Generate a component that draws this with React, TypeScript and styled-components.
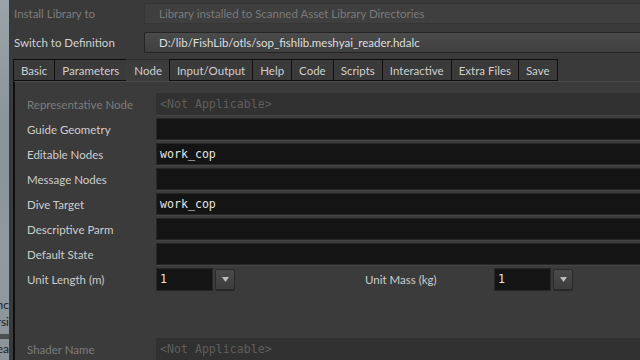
import React from 'react';
import styled, { createGlobalStyle } from 'styled-components';

const GlobalStyle = createGlobalStyle`
  html, body {
    margin: 0;
    padding: 0;
    background-color: #3a3a3a;
  }

  body {
    font-family: Lato, 'Noto Sans', sans-serif;
    font-size: 11.5px;
  }
`;

const Page = styled.div`
  width: 640px;
  height: 360px;
  display: flex;
  overflow: hidden;
`;

const SideStrip = styled.div`
  width: 9px;
  flex-shrink: 0;
  background-color: #8e989d;
  background-image: linear-gradient(
    180deg,
    #9aa3a7 0%,
    #87929a 40%,
    #909a9f 70%,
    #8a949a 100%
  );
  display: flex;
  flex-direction: column;
  justify-content: flex-end;
  align-items: flex-end;
  padding-bottom: 3px;
  overflow: hidden;
  color: #1e1e1e;
  font-size: 12px;
`;

const StripWord = styled.div`
  white-space: nowrap;
  line-height: 17px;
`;

const StripBar = styled.div`
  width: 100%;
  height: 5px;
  margin: 4px 0px 1px 0px;
  background-color: #4a4f52;
`;

const Panel = styled.div`
  flex: 1;
  min-width: 0;
  background-color: #3a3a3a;
  padding: 3px 0px 0px 4px;
  display: flex;
  flex-direction: column;
`;

const TopRow = styled.div`
  height: 21px;
  display: flex;
  align-items: center;
  margin-bottom: 8px;
`;

const TopLabel = styled.div<{ $dim?: boolean }>`
  width: 130px;
  flex-shrink: 0;
  padding-left: 1px;
  color: ${(p) => (p.$dim ? '#7c7c7c' : '#d2d2d2')};
`;

const TopField = styled.div<{ $button?: boolean }>`
  flex: 1;
  height: 100%;
  box-sizing: border-box;
  padding-left: 14px;
  display: flex;
  align-items: center;
  white-space: nowrap;
  overflow: hidden;
  border: 1px solid ${(p) => (p.$button ? '#252525' : '#363636')};
  border-right: none;
  border-radius: 2px 0px 0px 2px;
  background: ${(p) =>
    p.$button ? 'linear-gradient(180deg, #4b4b4b, #3f3f3f)' : '#3f3f3f'};
  color: ${(p) => (p.$button ? '#dedede' : '#7a7a7a')};
`;

const TabBar = styled.div`
  display: flex;
  height: 22px;
  margin-top: -2px;
`;

const Tab = styled.div<{ $active?: boolean }>`
  box-sizing: border-box;
  height: 22px;
  padding: 0px 7px;
  display: flex;
  align-items: center;
  color: #cfcfcf;
  background-color: ${(p) => (p.$active ? '#3c3c3c' : '#3a3a3a')};
  border: 1px solid ${(p) => (p.$active ? '#3c3c3c' : '#0e0e0e')};
  border-top-color: ${(p) => (p.$active ? '#2e2e2e' : '#0e0e0e')};
  border-bottom: ${(p) => (p.$active ? 'none' : '1px solid #0e0e0e')};
  margin-left: -1px;

  &:first-child {
    margin-left: 0px;
  }
`;

const TabPane = styled.div`
  flex: 1;
  border-left: 2px solid #0e0e0e;
  border-top: 1px solid #4a4a4a;
  background-color: #3b3b3b;
  padding: 11px 0px 0px 12px;
  display: flex;
  flex-direction: column;
  gap: 3px;
`;

const Row = styled.div<{ $spaced?: boolean }>`
  height: 22px;
  display: flex;
  align-items: center;
  margin-top: ${(p) => (p.$spaced ? '45px' : '0px')};
`;

const Label = styled.div<{ $dim?: boolean }>`
  width: 129px;
  flex-shrink: 0;
  color: ${(p) => (p.$dim ? '#7c7c7c' : '#cdcdcd')};
  white-space: nowrap;
`;

const Field = styled.div<{ $disabled?: boolean }>`
  flex: 1;
  height: 100%;
  box-sizing: border-box;
  padding-left: 3px;
  display: flex;
  align-items: center;
  font-family: 'DejaVu Sans Mono', monospace;
  font-size: 11.6px;
  white-space: nowrap;
  background-color: ${(p) => (p.$disabled ? '#313131' : '#141414')};
  color: ${(p) => (p.$disabled ? '#5e5e5e' : '#e4e4e4')};
  border: 1px solid ${(p) => (p.$disabled ? '#313131' : '#272727')};
  border-right: none;
  box-shadow: 0px 1px 0px #454545;
`;

const Group = styled.div`
  width: 209px;
  flex-shrink: 0;
  height: 100%;
  display: flex;
  align-items: center;
  gap: 2px;
`;

const NumField = styled(Field)`
  flex: none;
  width: 57px;
  height: 23px;
  border: 1px solid #272727;
  box-shadow: none;
`;

const MenuButton = styled.div`
  width: 20px;
  height: 21px;
  box-sizing: border-box;
  display: flex;
  align-items: center;
  justify-content: center;
  border: 1px solid #2a2a2a;
  border-radius: 2px;
  background: linear-gradient(180deg, #4a4a4a, #3d3d3d);
  box-shadow: 0px 1px 0px #262626;
`;

const Arrow = () => (
  <svg width="7" height="5" viewBox="0 0 7 5">
    <polygon points="0,0 7,0 3.5,5" fill="#bdbdbd" />
  </svg>
);

const rows = [
  { label: 'Guide Geometry', value: '' },
  { label: 'Editable Nodes', value: 'work_cop' },
  { label: 'Message Nodes', value: '' },
  { label: 'Dive Target', value: 'work_cop' },
  { label: 'Descriptive Parm', value: '' },
  { label: 'Default State', value: '' },
];

const tabs = [
  'Basic',
  'Parameters',
  'Node',
  'Input/Output',
  'Help',
  'Code',
  'Scripts',
  'Interactive',
  'Extra Files',
  'Save',
];

export default function App() {
  return (
    <Page>
      <GlobalStyle />
      <SideStrip>
        <StripWord>Sync</StripWord>
        <StripWord>Versi</StripWord>
        <StripBar />
        <StripWord>Area</StripWord>
      </SideStrip>
      <Panel>
        <TopRow>
          <TopLabel $dim>Install Library to</TopLabel>
          <TopField>Library installed to Scanned Asset Library Directories</TopField>
        </TopRow>
        <TopRow>
          <TopLabel>Switch to Definition</TopLabel>
          <TopField $button>
            D:/lib/FishLib/otls/sop_fishlib.meshyai_reader.hdalc
          </TopField>
        </TopRow>
        <TabBar>
          {tabs.map((t) => (
            <Tab key={t} $active={t === 'Node'}>
              {t}
            </Tab>
          ))}
        </TabBar>
        <TabPane>
          <Row>
            <Label $dim>Representative Node</Label>
            <Field $disabled>&lt;Not Applicable&gt;</Field>
          </Row>
          {rows.map((r) => (
            <Row key={r.label}>
              <Label>{r.label}</Label>
              <Field>{r.value}</Field>
            </Row>
          ))}
          <Row>
            <Label>Unit Length (m)</Label>
            <Group>
              <NumField>1</NumField>
              <MenuButton>
                <Arrow />
              </MenuButton>
            </Group>
            <Label>Unit Mass (kg)</Label>
            <Group>
              <NumField>1</NumField>
              <MenuButton>
                <Arrow />
              </MenuButton>
            </Group>
          </Row>
          <Row $spaced>
            <Label $dim>Shader Name</Label>
            <Field $disabled>&lt;Not Applicable&gt;</Field>
          </Row>
        </TabPane>
      </Panel>
    </Page>
  );
}
